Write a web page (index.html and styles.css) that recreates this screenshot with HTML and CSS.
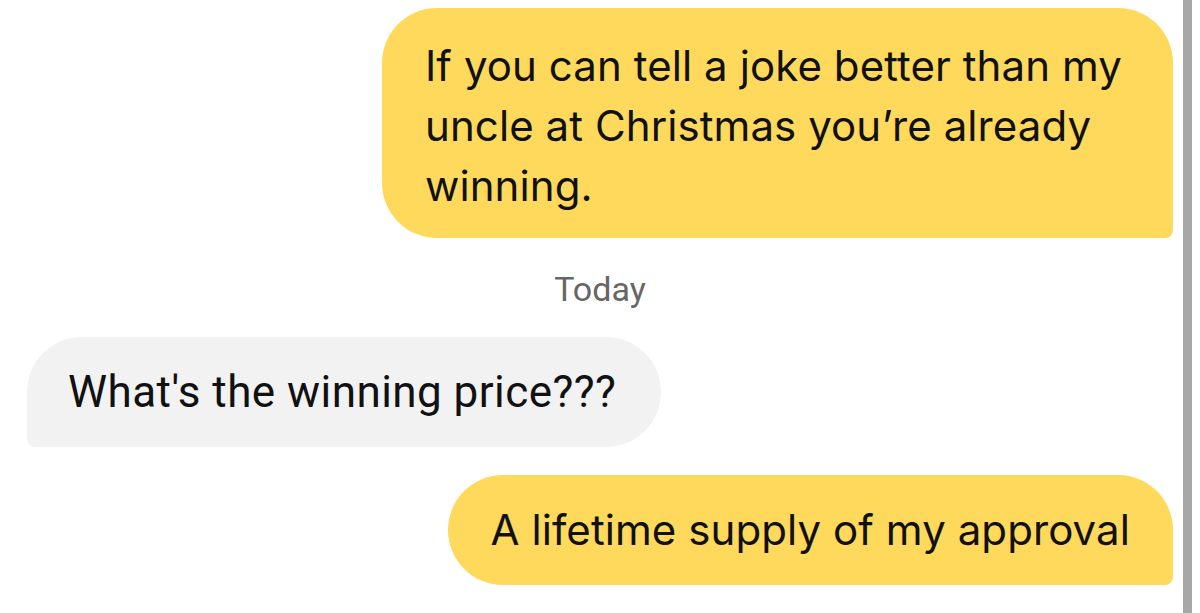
FILE: index.html
```html
<!DOCTYPE html>
<html lang="en">
<head>
    <meta charset="UTF-8">
    <meta name="viewport" content="width=device-width, initial-scale=1.0">
    <title>Chat</title>
    <link rel="stylesheet" href="styles.css">
</head>
<body>
<div class="chat">
    <div class="bubble sent first">
        If you can tell a joke better than my uncle at Christmas you’re already winning.
    </div>

    <div class="day">Today</div>

    <div class="bubble received">
        What's the winning price???
    </div>

    <div class="bubble sent last">
        A lifetime supply of my approval
    </div>
</div>
</body>
</html>
```

FILE: styles.css
```css
* {
    box-sizing: border-box;
    margin: 0;
    padding: 0;
}

body {
    background: #fff;
    color: #111;
}

.chat {
    width: 1192px;
    min-height: 613px;
    padding: 8px 10px 0 27px;
    border-right: 9px solid #a7a7a7;
    display: flex;
    flex-direction: column;
}

.bubble {
    font-family: "Inter", sans-serif;
    font-size: 42px;
    line-height: 60px;
    letter-spacing: 0.08px;
}

.sent {
    align-self: flex-end;
    background: #fed95c;
    border-radius: 55px 55px 8px 55px;
}

.first {
    width: 791px;
    height: 230px;
    padding: 28px 30px 22px 43px;
}

.day {
    font-family: "Roboto", sans-serif;
    font-size: 34px;
    color: #666;
    text-align: center;
    margin: 31px 0 28px 0;
    line-height: 40px;
}

.received {
    align-self: flex-start;
    font-family: "Roboto", sans-serif;
    font-size: 44px;
    letter-spacing: 0.45px;
    background: #f2f2f2;
    border-radius: 55px 55px 55px 8px;
    height: 110px;
    padding: 25px 45px 25px 41px;
}

.last {
    margin-top: 28px;
    height: 110px;
    padding: 25px 43px 25px 42px;
}
```
